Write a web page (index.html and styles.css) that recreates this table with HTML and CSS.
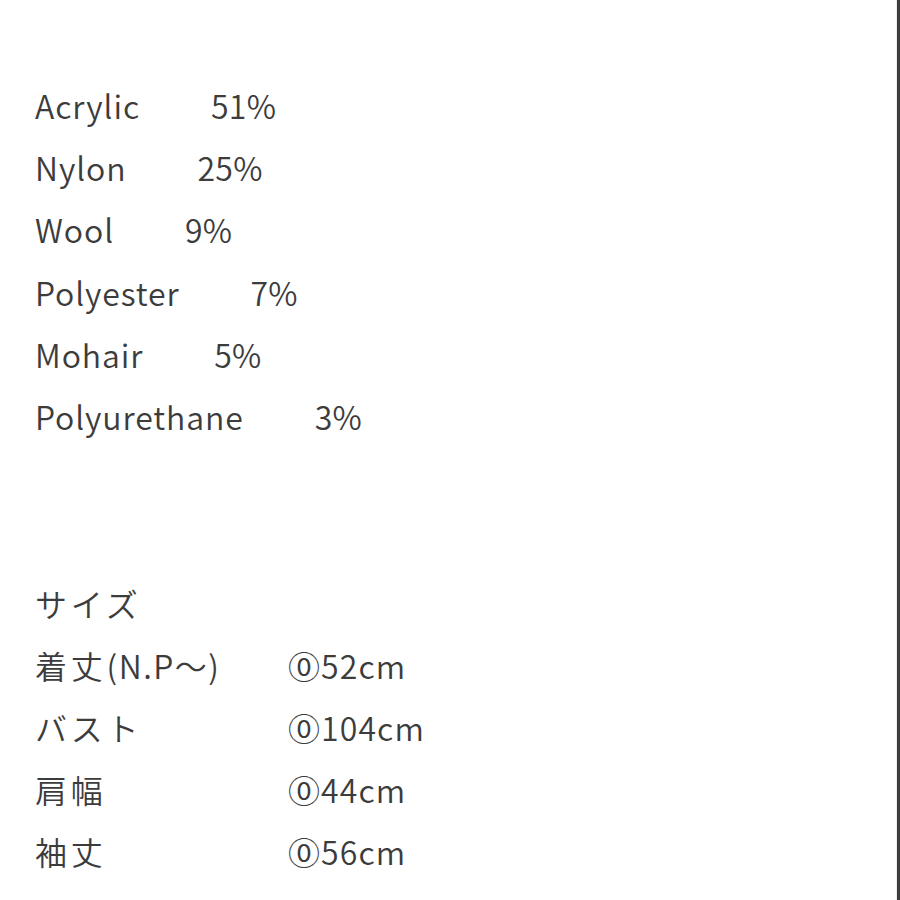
FILE: index.html
```html
<!DOCTYPE html>
<html lang="ja">
<head>
<meta charset="utf-8">
<link rel="stylesheet" href="styles.css">
</head>
<body>
<div class="page">
  <div class="content">
    <div class="line"><span>Acrylic</span><span class="pct">51%</span></div>
    <div class="line"><span>Nylon</span><span class="pct">25%</span></div>
    <div class="line"><span>Wool</span><span class="pct">9%</span></div>
    <div class="line"><span>Polyester</span><span class="pct">7%</span></div>
    <div class="line"><span>Mohair</span><span class="pct">5%</span></div>
    <div class="line"><span>Polyurethane</span><span class="pct">3%</span></div>
    <div class="line blank"></div>
    <div class="line blank"></div>
    <div class="line"><span class="ja">サイズ</span></div>
    <div class="size-row"><span><span class="ja">着丈</span><span class="lat">(N.P〜)</span></span><span class="val">⓪52cm</span></div>
    <div class="size-row"><span class="ja">バスト</span><span class="val">⓪104cm</span></div>
    <div class="size-row"><span class="ja">肩幅</span><span class="val">⓪44cm</span></div>
    <div class="size-row"><span class="ja">袖丈</span><span class="val">⓪56cm</span></div>
  </div>
  <div class="edge"></div>
</div>
</body>
</html>
```
FILE: styles.css
```css
html, body {
  margin: 0;
  padding: 0;
  background: #ffffff;
}
.page {
  width: 900px;
  height: 900px;
  display: flex;
  overflow: hidden;
}
.content {
  flex: 1;
  padding: 74px 0 0 35px;
  font-family: "Noto Sans CJK JP", "Noto Sans", sans-serif;
  font-size: 32px;
  font-weight: 350;
  letter-spacing: 0.9px;
  color: #3c3c3c;
}
.line {
  height: 62.2px;
  line-height: 62.2px;
  white-space: nowrap;
}
.pct {
  margin-left: 71px;
  letter-spacing: 0.3px;
}
.ja {
  letter-spacing: 3.8px;
}
.lat {
  letter-spacing: 1.5px;
}
.val {
  letter-spacing: 1.1px;
}
.size-row {
  height: 62.2px;
  line-height: 62.2px;
  display: grid;
  grid-template-columns: 253px auto;
  white-space: nowrap;
}
.edge {
  width: 3px;
  background: #3d3d3d;
  border-left: 1px solid #eeeeee;
}
```
